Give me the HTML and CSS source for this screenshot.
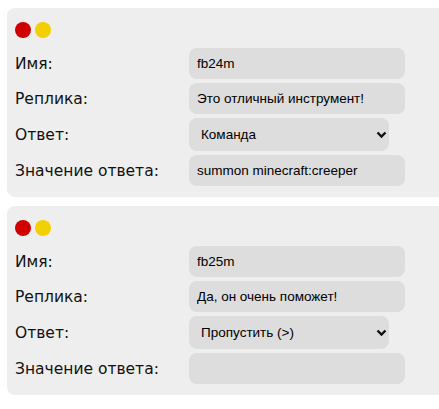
FILE: index.html
```html
<!DOCTYPE html>
<html lang="ru">
<head>
<meta charset="utf-8">
<link rel="stylesheet" href="styles.css">
</head>
<body>
<div class="page">
  <div class="card">
    <div class="dots"><span class="dot red"></span><span class="dot yellow"></span></div>
    <div class="row"><label class="label">Имя:</label><input class="field" value="fb24m"></div>
    <div class="row"><label class="label">Реплика:</label><input class="field" value="Это отличный инструмент!"></div>
    <div class="row"><label class="label">Ответ:</label>
      <div class="select-wrap">
        <select class="select"><option>Команда</option></select>
        <svg class="chev" width="11" height="8" viewBox="0 0 11 8"><path d="M1.5 1.5 L5.5 5.5 L9.5 1.5" fill="none" stroke="#111" stroke-width="2.4"/></svg>
      </div>
    </div>
    <div class="row"><label class="label">Значение ответа:</label><input class="field" value="summon minecraft:creeper"></div>
  </div>
  <div class="card">
    <div class="dots"><span class="dot red"></span><span class="dot yellow"></span></div>
    <div class="row"><label class="label">Имя:</label><input class="field" value="fb25m"></div>
    <div class="row"><label class="label">Реплика:</label><input class="field" value="Да, он очень поможет!"></div>
    <div class="row"><label class="label">Ответ:</label>
      <div class="select-wrap">
        <select class="select"><option>Пропустить (&gt;)</option></select>
        <svg class="chev" width="11" height="8" viewBox="0 0 11 8"><path d="M1.5 1.5 L5.5 5.5 L9.5 1.5" fill="none" stroke="#111" stroke-width="2.4"/></svg>
      </div>
    </div>
    <div class="row"><label class="label">Значение ответа:</label><input class="field" value=""></div>
  </div>
</div>
</body>
</html>
```
FILE: styles.css
```css
html, body {
  margin: 0;
  padding: 0;
  background: #ffffff;
  overflow: hidden;
}
.page {
  display: flex;
  flex-direction: column;
  gap: 9px;
  padding: 8px 0 0 7px;
}
.card {
  width: 450px;
  box-sizing: border-box;
  background: #eeeeee;
  border-radius: 8px;
  padding: 14px 8px 11px 8px;
  display: flex;
  flex-direction: column;
  gap: 4px;
}
.dots {
  display: flex;
  gap: 4px;
  height: 16px;
  margin-bottom: 6px;
}
.dot {
  width: 16px;
  height: 16px;
  border-radius: 50%;
}
.red { background: #d00000; }
.yellow { background: #f2d000; }
.row {
  display: flex;
  align-items: center;
}
.label {
  width: 174px;
  font-family: "DejaVu Sans", sans-serif;
  font-size: 15.5px;
  color: #111111;
}
.field {
  width: 216px;
  height: 31px;
  box-sizing: border-box;
  border: none;
  outline: none;
  border-radius: 8px;
  background: #dddddd;
  padding: 0 8px;
  font-family: "Liberation Sans", Arial, sans-serif;
  font-size: 13.5px;
  color: #000000;
}
.select-wrap {
  position: relative;
  width: 200px;
  height: 33px;
}
.select {
  appearance: none;
  -webkit-appearance: none;
  width: 200px;
  height: 33px;
  border: none;
  outline: none;
  border-radius: 8px;
  background: #dddddd;
  padding: 0 12px;
  font-family: "Liberation Sans", Arial, sans-serif;
  font-size: 13.5px;
  color: #000000;
}
.chev {
  position: absolute;
  right: 2px;
  top: 13px;
}
```
